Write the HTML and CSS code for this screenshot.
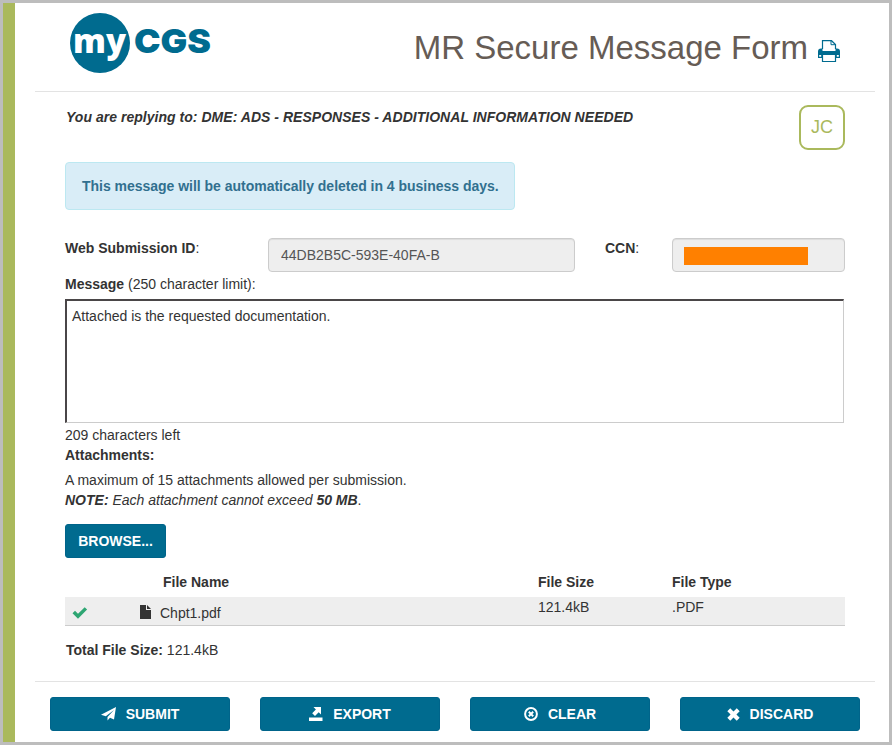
FILE: index.html
```
<!DOCTYPE html>
<html lang="en">
<head>
<meta charset="UTF-8">
<meta name="viewport" content="width=device-width, initial-scale=1.0">
<title>myCGS - MR Secure Message Form</title>
<link rel="stylesheet" href="styles.css">
</head>
<body>
  <div class="page">
    <div class="header">
      <svg class="logo" width="145" height="62" viewBox="0 0 145 62">
        <circle cx="31" cy="31" r="30"/>
        <text class="logo-my" x="4" y="41" textLength="53" lengthAdjust="spacingAndGlyphs">my</text>
        <text class="logo-cgs" x="65" y="40.5" textLength="77" lengthAdjust="spacingAndGlyphs">CGS</text>
      </svg>
      <h1>MR Secure Message Form</h1>
      <svg class="print-icon" width="22" height="22" viewBox="0 0 22 22">
        <path d="M4.500 9V.7h9l4 3.800V9" fill="#fff" stroke="#006b8f" stroke-width="1.2"/>
        <path d="M13 .7v4h4.500" fill="none" stroke="#006b8f"/>
        <path d="M3 8.500h1.500V11h13V8.500H19a3 3 0 0 1 3 3V18h-4.500v-3.500h-13V18H0v-6.500a3 3 0 0 1 3-3z"/>
        <path d="M1.200 15h2v1.800h-2zM18.800 15h2v1.800h-2z" fill="#fff"/>
        <path d="M4.500 14.500h13v7h-13z" fill="#fff" stroke="#006b8f" stroke-width="1.2"/>
      </svg>
    </div>

    <div class="content">
      <div class="reply">
        <p>You are replying to: DME: ADS - RESPONSES - ADDITIONAL INFORMATION NEEDED</p>
        <div class="initials">JC</div>
      </div>

      <div class="alert">This message will be automatically deleted in 4 business days.</div>

      <div class="fields">
        <label for="submissionId"><b>Web Submission ID</b>:</label>
        <input type="text" id="submissionId" class="form-control" value="44DB2B5C-593E-40FA-B" readonly>
        <label for="ccn" class="ccn-label"><b>CCN</b>:</label>
        <div id="ccn" class="form-control"><span class="redacted"></span></div>
      </div>

      <label class="message-label" for="message"><b>Message</b> (250 character limit):</label>
      <textarea id="message">Attached is the requested documentation.</textarea>
      <div>209 characters left</div>
      <div><b>Attachments:</b></div>
      <div class="notes">
        A maximum of 15 attachments allowed per submission.<br>
        <i><b>NOTE:</b> Each attachment cannot exceed <b>50 MB</b></i>.
      </div>

      <button class="btn browse">BROWSE...</button>

      <div class="files">
        <div class="file-row file-head">
          <span></span>
          <span class="head-name">File Name</span>
          <span>File Size</span>
          <span>File Type</span>
        </div>
        <div class="file-row file-item">
          <svg class="check" width="16" height="12" viewBox="0 0 16 12"><path d="M.5 6.200 3 3.800l3 2.900L12.700.3l2.400 2.300L6 11.700z"/></svg>
          <span class="file-name">
            <svg width="11" height="14" viewBox="0 0 11 14"><path d="M0 0h6v5h5v9H0z"/><path d="M7 0l4 4H7z"/></svg>
            Chpt1.pdf
          </span>
          <span>121.4kB</span>
          <span>.PDF</span>
        </div>
      </div>

      <div class="total"><b>Total File Size:</b> 121.4kB</div>
    </div>

    <div class="actions">
      <button class="btn">
        <svg width="15" height="14" viewBox="0 0 15 14"><path d="M15 0 13 12.500 9 10.800 6.500 13.500V10L13 3 4.800 9.300 0 7.800z"/></svg>
        SUBMIT
      </button>
      <button class="btn">
        <svg width="14" height="14" viewBox="0 0 14 14"><path d="M0 10.500h13.500V14H0z"/><path d="M4.500 0H12v7.500L9.700 5.300 6 9 3.200 6.200l3.700-3.700z"/></svg>
        EXPORT
      </button>
      <button class="btn">
        <svg width="14" height="14" viewBox="0 0 14 14"><circle cx="7" cy="7" r="5.900" fill="none" stroke="#fff" stroke-width="2"/><path d="M4.800 4.800l4.400 4.400M9.200 4.800 4.800 9.200" stroke="#fff" stroke-width="2"/></svg>
        CLEAR
      </button>
      <button class="btn">
        <svg width="13" height="13" viewBox="0 0 12 12"><path d="M3 .3 6 3.300 9 .3 11.700 3l-3 3 3 3L9 11.700l-3-3-3 3L.3 9l3-3-3-3z"/></svg>
        DISCARD
      </button>
    </div>
  </div>
</body>
</html>
```
FILE: styles.css
```
* {
  box-sizing: border-box;
}

body {
  margin: 0;
  background-color: #bdbdbd;
  padding: 3px;
  font-family: "Liberation Sans", Arial, sans-serif;
  font-size: 14px;
  line-height: 20px;
  color: #333;
}

.page {
  height: 739px;
  background-color: #fff;
  border-left: 12px solid #aab95c;
  padding: 0 14px 0 20px;
}

.header {
  display: flex;
  height: 89px;
  padding: 9px 35px 0 34px;
  border-bottom: 1px solid #e3e3e3;
}

.logo {
  fill: #006b8f;
}

.logo-my {
  font-family: "Open Sans", sans-serif;
  font-weight: 800;
  font-size: 34px;
  fill: #fff;
}

.logo-cgs {
  font-family: Inter, sans-serif;
  font-weight: 900;
  font-size: 33px;
}

h1 {
  margin: 16px 10px 0 auto;
  font-size: 33px;
  font-weight: normal;
  line-height: 40px;
  color: #665c55;
}

.print-icon {
  margin-top: 28px;
  fill: #006b8f;
}

.content {
  height: 589px;
  padding: 13px 30px 0;
}

.reply {
  display: flex;
  justify-content: space-between;
}

.reply p {
  margin: 2px 0 0 1px;
  font-weight: bold;
  font-style: italic;
  letter-spacing: 0.03px;
}

.initials {
  width: 46px;
  height: 45px;
  border: 2px solid #aab95c;
  border-radius: 9px;
  color: #aab95c;
  font-size: 18px;
  line-height: 41px;
  text-align: center;
}

.alert {
  width: 450px;
  height: 48px;
  margin: 12px 0 28px;
  padding: 13px 16px;
  background-color: #d9edf7;
  border: 1px solid #bce8f1;
  border-radius: 4px;
  color: #31708f;
  font-weight: bold;
  white-space: nowrap;
  letter-spacing: -0.02px;
}

.fields {
  display: grid;
  grid-template-columns: 203px 307px 97px 173px;
}

.ccn-label {
  padding-left: 30px;
}

.form-control {
  height: 34px;
  padding: 6px 12px;
  border: 1px solid #ccc;
  border-radius: 4px;
  background-color: #eee;
  box-shadow: inset 0 1px 1px rgba(0, 0, 0, 0.075);
  color: #555;
  font: inherit;
}

div.form-control {
  padding: 8px 11px;
}

.redacted {
  display: block;
  width: 124px;
  height: 18px;
  background-color: #ff8000;
}

.message-label {
  display: block;
  margin: 2px 0 5px;
}

textarea {
  display: block;
  width: 779px;
  height: 124px;
  margin-bottom: 2px;
  padding: 5px;
  border: 1px solid #ccc;
  border-top: 2px solid #4a4648;
  border-left: 2px solid #4a4648;
  resize: none;
  font: inherit;
  color: inherit;
}

.notes {
  margin: 5px 0 14px;
}

.btn {
  display: flex;
  align-items: center;
  justify-content: center;
  gap: 10px;
  height: 34px;
  padding: 0;
  background-color: #006b8f;
  border: 1px solid #00648a;
  border-radius: 3px;
  color: #fff;
  font: inherit;
  font-weight: bold;
}

.btn svg {
  fill: #fff;
}

.browse {
  width: 101px;
}

.files {
  margin-top: 14px;
}

.file-row {
  display: grid;
  grid-template-columns: 75px 398px 134px 173px;
}

.file-head {
  font-weight: bold;
  padding-bottom: 5px;
}

.head-name {
  padding-left: 23px;
}

.file-item {
  height: 29px;
  background-color: #eee;
  border-bottom: 1px solid #ccc;
}

.check {
  margin: 10px 0 0 7px;
  fill: #2ea673;
}

.file-name {
  display: flex;
  align-items: center;
  gap: 9px;
  padding-top: 3px;
}

.file-name svg {
  margin-top: -2px;
  fill: #333;
}

.total {
  margin: 14px 0 0 1px;
}

.actions {
  display: grid;
  grid-template-columns: repeat(4, 180px);
  gap: 30px;
  padding: 15px 15px 0;
  border-top: 1px solid #e3e3e3;
}
```
